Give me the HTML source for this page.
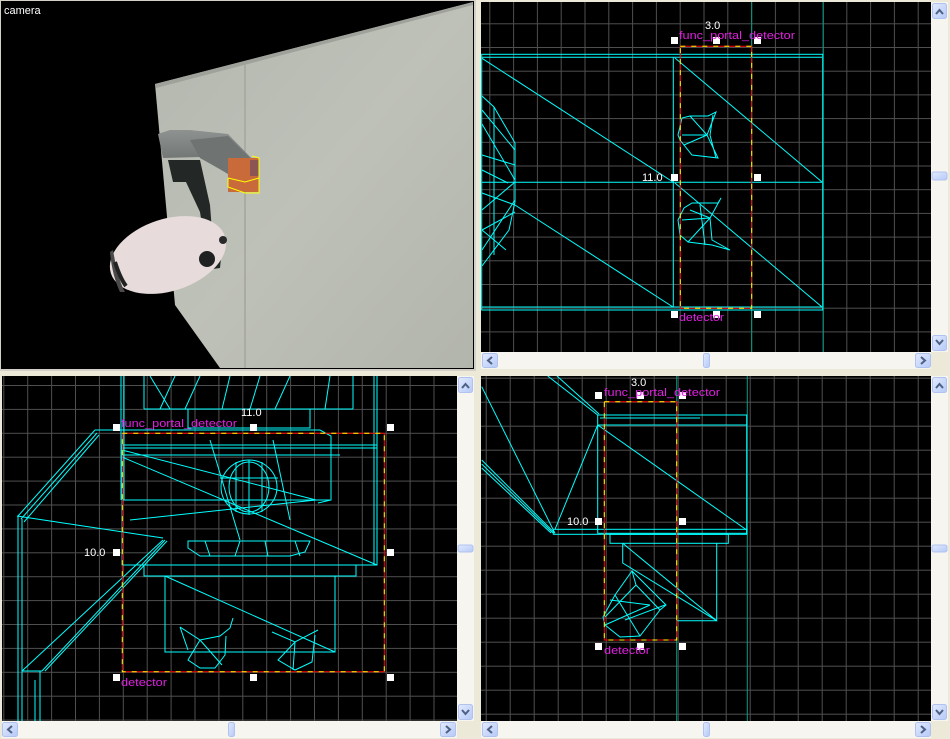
<!DOCTYPE html>
<html><head><meta charset="utf-8"><style>
html,body{margin:0;padding:0;background:#ece9d8;width:950px;height:739px;overflow:hidden}
svg{display:block}
text{font-family:"Liberation Sans",sans-serif;font-size:11px}
</style></head><body>
<svg width="950" height="739" viewBox="0 0 950 739" xmlns="http://www.w3.org/2000/svg">
<defs>
<pattern id="gTR" patternUnits="userSpaceOnUse" x="489.3" y="23.3" width="23.8" height="23.7"><path d="M0.5 0V23.7M0 0.5H23.8" stroke="#4f4f4f" stroke-width="1" fill="none"/></pattern>
<pattern id="gBL" patternUnits="userSpaceOnUse" x="3.3" y="385" width="23.9" height="23.9"><path d="M0.5 0V23.9M0 0.5H23.9" stroke="#4f4f4f" stroke-width="1" fill="none"/></pattern>
<pattern id="gBR" patternUnits="userSpaceOnUse" x="485.7" y="377.7" width="24" height="24"><path d="M0.5 0V24M0 0.5H24" stroke="#4f4f4f" stroke-width="1" fill="none"/></pattern>
<linearGradient id="wall" x1="0" y1="0" x2="1" y2="1"><stop offset="0" stop-color="#b3b7ae"/><stop offset="0.5" stop-color="#bec1b8"/><stop offset="1" stop-color="#b2b5ac"/></linearGradient>
<linearGradient id="arm" x1="0" y1="0" x2="0" y2="1"><stop offset="0" stop-color="#8e9290"/><stop offset="1" stop-color="#5d6260"/></linearGradient>
<linearGradient id="sb" x1="0" y1="0" x2="1" y2="1"><stop offset="0" stop-color="#e2eafe"/><stop offset="1" stop-color="#b6c9f7"/></linearGradient>
<clipPath id="cTR"><rect x="481" y="2" width="450" height="350"/></clipPath>
<clipPath id="cBL"><rect x="2" y="376" width="455" height="345"/></clipPath>
<clipPath id="cBR"><rect x="481" y="376" width="450" height="345"/></clipPath>
<g id="btn"><rect x="0.5" y="0.5" width="14" height="15" rx="2" fill="url(#sb)" stroke="#b0c2ef"/></g>
</defs>

<!-- CAMERA -->
<rect x="0" y="0" width="476" height="371" fill="#d4d0c8"/>
<rect x="1" y="1" width="473" height="368" fill="#000"/>
<polygon points="155,84 473,2 473,368 220,368 175,305" fill="url(#wall)"/>
<line x1="245" y1="64" x2="245" y2="368" stroke="#a3a69e" stroke-width="1.5"/>
<polygon points="155,84 473,2 473,5 156,88" fill="#9fa29a"/>
<!-- arm -->
<polygon points="158,134 170,130 190,130 228,134 253,160 253,180 233,177 200,157 163,158" fill="url(#arm)"/>
<polygon points="190,140 228,136 253,162 253,180 232,176 200,158" fill="#6f7472"/>
<!-- orange -->
<rect x="228" y="158" width="31" height="34" fill="#c86a3a"/>
<rect x="250" y="160" width="9" height="16" fill="#8a5552"/>
<path d="M228 178 L228 187 L245 193 L259 193 L259 158 L252 156 M228 178 L245 182 L259 178" stroke="#ffff00" fill="none" stroke-width="1"/>
<!-- bracket -->
<polygon points="168,160 200,160 210,205 213,245 222,248 220,268 205,270 200,255 205,245 200,212 186,182 173,182" fill="#232725"/>
<!-- body -->
<ellipse cx="168" cy="255" rx="60" ry="36" transform="rotate(-18 168 255)" fill="#e7dcdb"/>
<path d="M113 250 Q118 280 125 292 L120 292 Q112 275 110 252 Z" fill="#4a4a4a"/>
<path d="M115 262 Q120 278 126 286" stroke="#222" stroke-width="4" fill="none"/>
<circle cx="207" cy="259" r="8" fill="#1f2221"/>
<circle cx="223" cy="240" r="4" fill="#2a2a2a"/>
<text x="4" y="14" fill="#fff" font-size="12">camera</text>

<!-- TOP RIGHT -->
<rect x="477" y="0" width="473" height="371" fill="#ece9d8"/>
<rect x="481" y="2" width="450" height="350" fill="#000"/>
<g clip-path="url(#cTR)">
<rect x="481" y="2" width="450" height="350" fill="url(#gTR)"/>
<g stroke="#00a088" stroke-width="1"><line x1="751.7" y1="2" x2="751.7" y2="352"/><line x1="823.3" y1="2" x2="823.3" y2="352"/></g>
<g stroke="#00ffff" stroke-width="1" fill="none">
<rect x="481.7" y="54.3" width="341" height="255.7"/>
<line x1="482" y1="57.3" x2="822" y2="57.3"/><line x1="482" y1="307" x2="822" y2="307"/>
<line x1="673.3" y1="57" x2="673.3" y2="307"/>
<line x1="482" y1="182.3" x2="822" y2="182.3"/>
<line x1="482" y1="58.3" x2="673" y2="182"/><line x1="675" y1="58" x2="822" y2="182"/>
<line x1="515" y1="205" x2="673" y2="307"/><line x1="675" y1="183" x2="822" y2="307"/>
<path d="M482 96 L494 107 L515 143 L515 202 L509 230 L482 266 M482 110 L515 150 M482 124 L515 180 M482 155 L515 165 M482 170 L508 183 M482 193 L515 205 M482 210 L515 182 M482 230 L515 212 M482 250 L515 200 M494 107 L494 255 M482 230 L506 250"/>
<path d="M678 135 L682 118 L690 116 L708 116 L716 112 L707 135 L718 158 L692 155 L680 140 Z M690 116 L707 135 M682 135 L707 135 M684 145 L707 135 M713 115 L710 135 L716 158"/>
<path d="M678 220 L684 208 L692 203 L718 203 L721 198 L710 218 L712 240 L730 250 L712 245 L688 242 L680 235 Z M690 210 L710 218 M682 220 L710 218 M688 242 L710 218 M700 205 L705 245"/>
</g>
<path d="M680.3 46.3 H751.7 V308.3 H680.3 Z" stroke="#ff0000" fill="none"/>
<path d="M680.3 46.3 H751.7 V308.3 H680.3 Z" stroke="#ffff00" fill="none" stroke-dasharray="5 6"/>
<g fill="#fff"><rect x="671" y="37" width="7" height="7"/><rect x="713" y="37" width="7" height="7"/><rect x="754" y="37" width="7" height="7"/><rect x="671" y="174" width="7" height="7"/><rect x="754" y="174" width="7" height="7"/><rect x="671" y="311" width="7" height="7"/><rect x="713" y="311" width="7" height="7"/><rect x="754" y="311" width="7" height="7"/></g>
<text x="705" y="29" fill="#fff" font-size="12">3.0</text>
<text x="679" y="39" fill="#e020e0" font-size="11.5" textLength="116" lengthAdjust="spacingAndGlyphs">func_portal_detector</text>
<text x="642" y="181" fill="#fff" font-size="12">11.0</text>
<text x="679" y="321" fill="#e020e0" font-size="11.5" textLength="45" lengthAdjust="spacingAndGlyphs">detector</text>
</g>
<rect x="931" y="2" width="17" height="350" fill="#f6f5f0"/>
<use href="#btn" x="932" y="3"/><use href="#btn" x="932" y="335"/>
<rect x="932" y="172" width="15" height="8" rx="2" fill="url(#sb)" stroke="#b0c2ef"/>
<path d="M936 14 L939.5 10 L943 14 M936 340 L939.5 344 L943 340" stroke="#4d6185" stroke-width="2" fill="none"/>
<rect x="481" y="352" width="450" height="17" fill="#f6f5f0"/>
<rect x="482.5" y="353.5" width="15" height="14" rx="2" fill="url(#sb)" stroke="#b0c2ef"/>
<rect x="915.5" y="353.5" width="15" height="14" rx="2" fill="url(#sb)" stroke="#b0c2ef"/>
<rect x="703.5" y="353.5" width="6" height="14" rx="2" fill="url(#sb)" stroke="#b0c2ef"/>
<path d="M492 357 L488 360.5 L492 364 M921 357 L925 360.5 L921 364" stroke="#4d6185" stroke-width="2" fill="none"/>

<!-- BOTTOM LEFT -->
<rect x="2" y="376" width="455" height="345" fill="#000"/>
<g clip-path="url(#cBL)">
<rect x="2" y="376" width="455" height="345" fill="url(#gBL)"/>
<g stroke="#00ffff" stroke-width="1" fill="none">
<path d="M121 376 V500 M124 376 V500 M374 376 V565 M377 376 V565"/>
<path d="M144 376 V409 M353 376 V409 M144 409 H353 M188 409 H310 V428 H188 Z M150 376 L170 409 M175 376 L160 409 M200 376 L185 409 M230 376 L222 409 M260 376 L250 409 M290 376 L275 409 M330 376 L325 409"/>
<path d="M18 516 L95 430 M21 519 L97 433 M24 522 L99 435 M95 430 H320 L331 436 L331 500 L318 503 M18 516 V721 M22 519 V721 M17 516 L163 538 M22 671 L163 540 M42 671 L165 540 M45 671 L167 541 M22 671 H42 M40 671 V721 M35 680 V721"/>
<rect x="122" y="445" width="255" height="120"/>
<path d="M122 448 H377 M122 455 H340 M122 457 L377 565 M122 450 L316 500 M130 520 L316 500 M122 500 H330"/>
<rect x="144" y="565" width="212" height="11"/>
<rect x="165" y="576" width="170" height="76"/>
<path d="M165 576 L335 652 M188 541 H310 L305 552 L290 556 L200 556 L188 548 Z M205 541 L210 556 M240 541 L235 556 M265 541 L268 556 M295 541 L300 556"/>
<ellipse cx="249" cy="487" rx="28" ry="27"/>
<ellipse cx="249" cy="487" rx="20" ry="25"/>
<path d="M236 462 V512 M249 460 V515 M262 462 V512 M220 478 L278 478 M225 500 L275 500 M210 440 L240 540 M273 440 L290 520"/>
<path d="M180 627 L200 640 L220 636 L230 628 L233 618 M200 640 L188 660 L200 668 L215 668 L225 655 L226 636 M200 640 L222 665 M180 627 L188 650"/>
<path d="M272 632 L295 642 L318 630 M295 642 L278 660 L295 670 L312 662 L315 635 M295 642 L293 670"/>
</g>
<path d="M122.3 433.3 H384.3 V671.7 H122.3 Z" stroke="#ff0000" fill="none"/>
<path d="M122.3 433.3 H384.3 V671.7 H122.3 Z" stroke="#ffff00" fill="none" stroke-dasharray="5 6"/>
<g fill="#fff"><rect x="113" y="424" width="7" height="7"/><rect x="250" y="424" width="7" height="7"/><rect x="387" y="424" width="7" height="7"/><rect x="113" y="549" width="7" height="7"/><rect x="387" y="549" width="7" height="7"/><rect x="113" y="674" width="7" height="7"/><rect x="250" y="674" width="7" height="7"/><rect x="387" y="674" width="7" height="7"/></g>
<text x="121" y="427" fill="#e020e0" font-size="11.5" textLength="116" lengthAdjust="spacingAndGlyphs">func_portal_detector</text>
<text x="241" y="416" fill="#fff" font-size="12">11.0</text>
<text x="84" y="556" fill="#fff" font-size="12">10.0</text>
<text x="121" y="686" fill="#e020e0" font-size="11.5" textLength="46" lengthAdjust="spacingAndGlyphs">detector</text>
</g>
<rect x="457" y="376" width="17" height="345" fill="#f6f5f0"/>
<use href="#btn" x="458" y="377"/><use href="#btn" x="458" y="704"/>
<rect x="458" y="545" width="15" height="7" rx="2" fill="url(#sb)" stroke="#b0c2ef"/>
<path d="M462 388 L465.5 384 L469 388 M462 710 L465.5 714 L469 710" stroke="#4d6185" stroke-width="2" fill="none"/>
<rect x="2" y="721" width="455" height="17" fill="#f6f5f0"/>
<rect x="2.5" y="722.5" width="15" height="14" rx="2" fill="url(#sb)" stroke="#b0c2ef"/>
<rect x="440.5" y="722.5" width="15" height="14" rx="2" fill="url(#sb)" stroke="#b0c2ef"/>
<rect x="228.5" y="722.5" width="6" height="14" rx="2" fill="url(#sb)" stroke="#b0c2ef"/>
<path d="M12 726 L8 729.5 L12 733 M446 726 L450 729.5 L446 733" stroke="#4d6185" stroke-width="2" fill="none"/>

<!-- BOTTOM RIGHT -->
<rect x="481" y="376" width="450" height="345" fill="#000"/>
<g clip-path="url(#cBR)">
<rect x="481" y="376" width="450" height="345" fill="url(#gBR)"/>
<g stroke="#00a088" stroke-width="1"><line x1="676.7" y1="376" x2="676.7" y2="721"/><line x1="747.3" y1="376" x2="747.3" y2="721"/></g>
<g stroke="#00ffff" stroke-width="1" fill="none">
<rect x="597.7" y="415" width="149" height="118.3"/>
<path d="M597.7 425 H746.7 M600 418 H700 M597.7 425 L746.7 530 M481.7 386.7 L555 533.3 M555 529.3 L597.7 425 M547.7 376 L597.7 415 M557 376 L599 414 M481.7 460 L555 533.3 M481.7 464 L553 533 M481.7 468 L551 533"/>
<rect x="553.3" y="529.3" width="193.4" height="5"/>
<rect x="610" y="534.3" width="118.3" height="9"/>
<path d="M622.7 543.3 V563 L716.7 620.7 V543.3 M622.7 543.3 L716.7 620.7 M676.7 620.7 H716.7"/>
<path d="M632 571 L666 605 L660 610 L640 636 L620 637 L605 625 L603 617 L615 595 Z M632 571 L636 585 L605 617 M636 585 L660 610 M610 600 L650 605 M605 625 L650 605 M615 595 L640 636 M625 620 L665 605"/>
</g>
<path d="M604.3 401.7 H676.7 V640 H604.3 Z" stroke="#ff0000" fill="none"/>
<path d="M604.3 401.7 H676.7 V640 H604.3 Z" stroke="#ffff00" fill="none" stroke-dasharray="5 6"/>
<g fill="#fff"><rect x="595" y="392" width="7" height="7"/><rect x="637" y="392" width="7" height="7"/><rect x="679" y="392" width="7" height="7"/><rect x="595" y="518" width="7" height="7"/><rect x="679" y="518" width="7" height="7"/><rect x="595" y="643" width="7" height="7"/><rect x="637" y="643" width="7" height="7"/><rect x="679" y="643" width="7" height="7"/></g>
<text x="631" y="386" fill="#fff" font-size="12">3.0</text>
<text x="604" y="396" fill="#e020e0" font-size="11.5" textLength="116" lengthAdjust="spacingAndGlyphs">func_portal_detector</text>
<text x="567" y="525" fill="#fff" font-size="12">10.0</text>
<text x="604" y="654" fill="#e020e0" font-size="11.5" textLength="46" lengthAdjust="spacingAndGlyphs">detector</text>
</g>
<rect x="931" y="376" width="17" height="345" fill="#f6f5f0"/>
<use href="#btn" x="932" y="377"/><use href="#btn" x="932" y="704"/>
<rect x="932" y="545" width="15" height="7" rx="2" fill="url(#sb)" stroke="#b0c2ef"/>
<path d="M936 388 L939.5 384 L943 388 M936 710 L939.5 714 L943 710" stroke="#4d6185" stroke-width="2" fill="none"/>
<rect x="481" y="721" width="450" height="17" fill="#f6f5f0"/>
<rect x="482.5" y="722.5" width="15" height="14" rx="2" fill="url(#sb)" stroke="#b0c2ef"/>
<rect x="915.5" y="722.5" width="15" height="14" rx="2" fill="url(#sb)" stroke="#b0c2ef"/>
<rect x="703.5" y="722.5" width="6" height="14" rx="2" fill="url(#sb)" stroke="#b0c2ef"/>
<path d="M492 726 L488 729.5 L492 733 M921 726 L925 729.5 L921 733" stroke="#4d6185" stroke-width="2" fill="none"/>
</svg>
</body></html>
